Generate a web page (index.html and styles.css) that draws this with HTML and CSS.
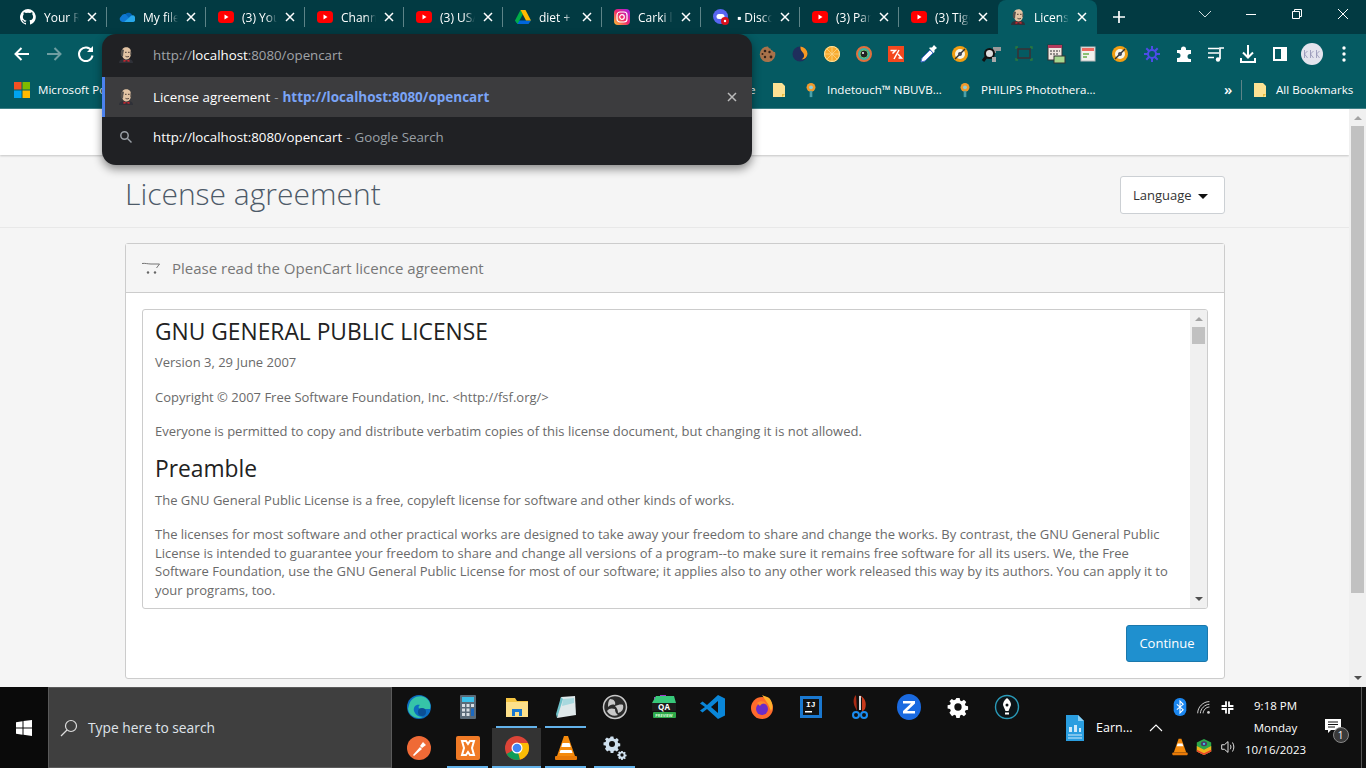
FILE: index.html
```html
<!DOCTYPE html>
<html lang="en">
<head>
<meta charset="UTF-8" />
<title>License agreement</title>
<link rel="stylesheet" href="styles.css">
</head>
<body>

<svg class="defs" width="0" height="0">
  <symbol id="yt" viewBox="0 0 16 16"><rect y="2" width="16" height="12" rx="3.5" fill="#f00"/><path d="M6.5 5.5v5l4-2.5z" fill="#fff"/></symbol>
  <symbol id="x" viewBox="0 0 10 10"><path d="M1 1l8 8M9 1l-8 8" stroke="currentColor" stroke-width="1.5" fill="none"/></symbol>
  <symbol id="jenkins" viewBox="0 0 16 16">
    <path d="M1 16c0-2.500 1.500-3.500 4-4h6c2.500.5 4 1.500 4 4z" fill="#2f3138"/>
    <path d="M3.500 6C3.500 2 5.500.3 8.500.3S13 2.500 13 6c0 3.500-1.500 6.500-4.500 6.500S4 10 3.500 6z" fill="#e3c4a4"/>
    <path d="M3.200 9C2.200 6 3 3.500 4.500 2.300L6 3 5.300 6.500 5 9.500z" fill="#55504c"/>
    <path d="M12.600 3.500l1 2.500-.6 2.500-.8-1z" fill="#55504c"/>
    <path d="M7 5.300h1.600M10 5.300h1.600M7.500 9.300c1 .7 2.500.7 3.500 0" stroke="#3a2c28" stroke-width=".9" fill="none"/>
    <path d="M5.500 12.500l3 1.300 3-1.300v2.500l-3-1-3 1z" fill="#c8262e"/>
  </symbol>
  <symbol id="folder" viewBox="0 0 14 16"><path d="M1 1h9l3 3v11H1z" fill="#fde293"/><path d="M10 15v-3h3z" fill="#e8b93c"/></symbol>
  <symbol id="pin" viewBox="0 0 12 18"><circle cx="6" cy="6" r="5" fill="#f09a2c"/><circle cx="6" cy="6" r="2.200" fill="#8fd0d8"/><rect x="4.500" y="10" width="3" height="7" fill="#4aa0a8"/></symbol>
  <symbol id="badge" viewBox="0 0 16 16"><circle cx="8" cy="8" r="8" fill="#f29d12"/><circle cx="8" cy="8" r="5" fill="#f7f3e8"/><path d="M3 13L13 3" stroke="#333" stroke-width="1.500"/><circle cx="8" cy="8" r="2" fill="#445"/></symbol>
  <symbol id="gear" viewBox="0 0 24 24"><path d="M10 1h4l.6 3 2 .9 2.600-1.700 2.800 2.800-1.700 2.600.9 2 3 .6v4l-3 .6-.9 2 1.700 2.600-2.800 2.800-2.600-1.700-2 .9-.6 3h-4l-.6-3-2-.9-2.600 1.700L1.600 19l1.700-2.600-.9-2-3-.6v-4l3-.6.9-2L1.600 5 4.400 2.200 7 3.900l2-.9z" fill="currentColor" transform="translate(1.200 1.200) scale(.9)"/><circle cx="12" cy="12" r="4" fill="#101010"/></symbol>
</svg>

<div class="screen">

  <div class="tabstrip">
    <div class="tab"><svg class="fav" viewBox="0 0 16 16"><path fill="#fff" d="M8 0a8 8 0 0 0-2.500 15.600c.4.100.5-.2.500-.4v-1.400c-2.200.5-2.700-1-2.700-1-.4-.9-.9-1.200-.9-1.200-.7-.5.100-.5.100-.5.800.1 1.200.8 1.200.8.700 1.200 1.900.9 2.300.7.100-.5.300-.9.500-1.100-1.800-.2-3.600-.9-3.600-4 0-.9.300-1.600.8-2.100-.1-.2-.4-1 .1-2.100 0 0 .7-.2 2.200.8a7.600 7.600 0 0 1 4 0c1.500-1 2.200-.8 2.200-.8.400 1.100.2 1.900.1 2.100.5.600.8 1.300.8 2.100 0 3.100-1.900 3.700-3.700 3.900.3.300.6.800.6 1.500v2.200c0 .2.100.5.600.4A8 8 0 0 0 8 0z"/></svg><span class="tab-title">Your Repositories</span><svg class="tab-x"><use href="#x"/></svg></div>
    <div class="tab"><svg class="fav" viewBox="0 0 16 16"><path fill="#0364b8" d="M6.500 5a4 4 0 0 1 6.800 1.700L8 10 4 8z"/><path fill="#0f78d4" d="M5.500 13H3.500A3 3 0 0 1 2 7.500 4 4 0 0 1 6.500 5L10 9z"/><path fill="#28a8ea" d="M5 13l7-6.300A3.200 3.200 0 0 1 14.500 13z"/></svg><span class="tab-title">My files</span><svg class="tab-x"><use href="#x"/></svg></div>
    <div class="tab"><svg class="fav"><use href="#yt"/></svg><span class="tab-title">(3) YouTube</span><svg class="tab-x"><use href="#x"/></svg></div>
    <div class="tab"><svg class="fav"><use href="#yt"/></svg><span class="tab-title">Channel</span><svg class="tab-x"><use href="#x"/></svg></div>
    <div class="tab"><svg class="fav"><use href="#yt"/></svg><span class="tab-title">(3) USA</span><svg class="tab-x"><use href="#x"/></svg></div>
    <div class="tab"><svg class="fav" viewBox="0 0 16 16"><path fill="#0066da" d="M0 11.500L2.500 15h11L16 11.500z"/><path fill="#00ac47" d="M5.500 1L0 11.500 2.500 15 8 5z"/><path fill="#ffba00" d="M5.500 1h5L16 11.500h-5z"/></svg><span class="tab-title">diet + exercise</span><svg class="tab-x"><use href="#x"/></svg></div>
    <div class="tab"><svg class="fav" viewBox="0 0 16 16"><defs><linearGradient id="ig" x1="0" y1="1" x2="1" y2="0"><stop offset="0" stop-color="#fdc830"/><stop offset=".5" stop-color="#f0246e"/><stop offset="1" stop-color="#a020f0"/></linearGradient></defs><rect width="16" height="16" rx="4" fill="url(#ig)"/><rect x="3" y="3" width="10" height="10" rx="3" fill="none" stroke="#fff" stroke-width="1.200"/><circle cx="8" cy="8" r="2.300" fill="none" stroke="#fff" stroke-width="1.200"/></svg><span class="tab-title">Carki library</span><svg class="tab-x"><use href="#x"/></svg></div>
    <div class="tab"><svg class="fav" viewBox="0 0 16 16"><circle cx="7.500" cy="7.500" r="7.500" fill="#5865f2"/><rect x="3.500" y="5" width="8" height="5" rx="2.500" fill="#fff"/><circle cx="12" cy="12" r="4" fill="#d8101c"/><circle cx="12" cy="12" r="1.200" fill="#fff"/></svg><span class="tab-title">▪ Discord</span><svg class="tab-x"><use href="#x"/></svg></div>
    <div class="tab"><svg class="fav"><use href="#yt"/></svg><span class="tab-title">(3) Party</span><svg class="tab-x"><use href="#x"/></svg></div>
    <div class="tab"><svg class="fav"><use href="#yt"/></svg><span class="tab-title">(3) Tiger</span><svg class="tab-x"><use href="#x"/></svg></div>
    <div class="tab tab-active"><svg class="fav"><use href="#jenkins"/></svg><span class="tab-title">License agreement</span><svg class="tab-x"><use href="#x"/></svg></div>
    <svg class="newtab" viewBox="0 0 12 12"><path d="M6 0v12M0 6h12" stroke="#fff" stroke-width="1.700"/></svg>
    <div class="winctl">
      <svg class="win-btn" viewBox="0 0 46 34"><path d="M17 11l6 6 6-6" fill="none" stroke="#cfdcdd"/></svg>
      <svg class="win-btn" viewBox="0 0 46 34"><path d="M18 14.500h10" stroke="#fff"/></svg>
      <svg class="win-btn" viewBox="0 0 46 34"><path d="M18.500 11.500h7v7h-7zM20.500 11.500v-2h7v7h-2" fill="none" stroke="#fff"/></svg>
      <svg class="win-btn" viewBox="0 0 46 34"><path d="M18 9l10 10M28 9l-10 10" stroke="#fff"/></svg>
    </div>
  </div>

  <div class="toolbar">
    <svg class="tb-btn" viewBox="0 0 32 32"><path d="M23 16H10M15.500 10L9.500 16l6 6" fill="none" stroke="#fff" stroke-width="2"/></svg>
    <svg class="tb-btn" viewBox="0 0 32 32"><path d="M9 16h13M16.500 10l6 6-6 6" fill="none" stroke="#6f9ea2" stroke-width="2"/></svg>
    <svg class="tb-btn" viewBox="0 0 32 32"><path d="M21.500 12.500a6.800 6.800 0 1 0 1 5" fill="none" stroke="#fff" stroke-width="2"/><path d="M23 8v6h-6z" fill="#fff"/></svg>
    <div class="tb-ext">
      <svg class="tb-btn" viewBox="0 0 32 32"><path d="M16 8.500c.5 1.500 1.500 2 2.500 2 0 1.200 1 2 2 2 .5 1 1.500 1.500 2.500 1.500a7.800 7.800 0 1 1-7-5.500z" fill="#a9724a"/><circle cx="13" cy="13" r="1.300" fill="#33221a"/><circle cx="17.500" cy="14" r="1.200" fill="#33221a"/><circle cx="19" cy="19" r="1.400" fill="#33221a"/><circle cx="13" cy="19" r="1.200" fill="#33221a"/><circle cx="10.500" cy="16" r="1" fill="#33221a"/></svg>
      <svg class="tb-btn" viewBox="0 0 32 32"><circle cx="16" cy="16" r="7.500" fill="#1f2e5c"/><path d="M16.500 8.500a7.500 7.500 0 0 1 7 7c0 3-2.500 6-6 6 3-2 3-4 2-6s-3.500-3-3-7z" fill="#f59a23"/></svg>
      <svg class="tb-btn" viewBox="0 0 32 32"><circle cx="16" cy="16" r="8" fill="#f9ab2e"/><path d="M16 9v14M9 16h14M11 11l10 10M21 11L11 21" stroke="#fcd58a" stroke-width=".8"/><circle cx="16" cy="16" r="7.500" fill="none" stroke="#fde3a0"/></svg>
      <svg class="tb-btn" viewBox="0 0 32 32"><circle cx="16" cy="16" r="7" fill="#3ab0a8" stroke="#e2703c" stroke-width="2"/><circle cx="16" cy="16" r="4" fill="#222" stroke="#6ac06a"/><circle cx="15" cy="15" r="1" fill="#fff"/></svg>
      <svg class="tb-btn" viewBox="0 0 32 32"><rect x="8" y="8" width="16" height="16" fill="#f4481e"/><path d="M10.500 12.500h5l-3 3M14 21l5-9M18 16l3.500 4h-3" fill="none" stroke="#fff" stroke-width="1.500"/></svg>
      <svg class="tb-btn" viewBox="0 0 32 32"><path d="M9 24l1-4 8-8 3 3-8 8z" fill="#fff" stroke="#4a6ed0"/><path d="M18 9.500l2 0 2-2.500 3 3-2.500 2v2l-1 1-4.500-5z" fill="#fff"/></svg>
      <svg class="tb-btn" viewBox="0 0 32 32"><use href="#badge" x="8" y="8" width="16" height="16"/></svg>
      <svg class="tb-btn" viewBox="0 0 32 32"><path d="M17 9h8v4h-5v2h-3z" fill="#999"/><circle cx="13.500" cy="15.500" r="4.500" fill="#ddd" stroke="#111" stroke-width="2"/><path d="M10 19l-3 4" stroke="#111" stroke-width="3"/><rect x="16" y="19" width="4" height="5" fill="#aaa"/></svg>
      <svg class="tb-btn" viewBox="0 0 32 32"><rect x="10" y="11" width="12" height="9" fill="none" stroke="#3b3134" stroke-width="1.500"/><path d="M8 11V9h2M22 9h2v2M24 20v2h-2M10 22H8v-2" fill="none" stroke="#2c7a3c" stroke-width="1.300"/></svg>
      <svg class="tb-btn" viewBox="0 0 32 32"><rect x="8" y="7" width="14" height="15" fill="#f1e6e0" stroke="#333"/><rect x="8" y="7" width="14" height="3" fill="#b33a5c"/><path d="M10 13h10M10 16h8" stroke="#333" stroke-dasharray="2 1"/><rect x="14" y="18" width="11" height="7" fill="#a6d88e" stroke="#333"/></svg>
      <svg class="tb-btn" viewBox="0 0 32 32"><rect x="9" y="9" width="14" height="14" fill="#f2f2ee" stroke="#bbb"/><rect x="10" y="10" width="12" height="3" fill="#ee6a60"/><path d="M11 16h6M11 19h4" stroke="#6ab04c" stroke-width="1.500"/></svg>
      <svg class="tb-btn" viewBox="0 0 32 32"><use href="#badge" x="8" y="8" width="16" height="16"/></svg>
      <svg class="tb-btn" viewBox="0 0 32 32"><path d="M16 8v16M8 16h16M10.300 10.300l11.400 11.400M21.700 10.300L10.300 21.700" stroke="#4c4ce8" stroke-width="2"/><circle cx="16" cy="16" r="5" fill="#4c4ce8"/><circle cx="16" cy="16" r="3" fill="#055a62"/></svg>
      <svg class="tb-btn" viewBox="0 0 32 32"><path d="M9 12h4v-1a2.500 2.500 0 0 1 5 0v1h5v4h-1a2.500 2.500 0 0 0 0 5h1v3H9v-4h1a2.500 2.500 0 0 0 0-5H9z" fill="#fff"/></svg>
      <svg class="tb-btn" viewBox="0 0 32 32"><path d="M8 10.500h11M8 15h11M8 19.500h6" stroke="#fff" stroke-width="1.700"/><path d="M20 21V10h4" fill="none" stroke="#fff" stroke-width="1.700"/><circle cx="18" cy="21.500" r="2.200" fill="#fff"/></svg>
      <svg class="tb-btn" viewBox="0 0 32 32"><path d="M16 7v12M11 14.500l5 5 5-5" fill="none" stroke="#fff" stroke-width="2"/><path d="M9 20v4h14v-4" fill="none" stroke="#fff" stroke-width="2"/></svg>
      <svg class="tb-btn" viewBox="0 0 32 32"><rect x="9" y="9" width="14" height="14" fill="#fff"/><rect x="11" y="11" width="6" height="10" fill="#055a62"/></svg>
      <svg class="tb-btn" viewBox="0 0 32 32"><circle cx="16" cy="16" r="11" fill="#e4e4ee"/><path d="M8.500 12v8M8.500 16l3-3M8.500 16l3 4M14.500 12v8M14.500 16l3-3M14.500 16l3 4M20.500 12v8M20.500 16l3-3M20.500 16l3 4" stroke="#9090b4" fill="none" stroke-width=".8"/></svg>
      <svg class="tb-btn" viewBox="0 0 32 32"><circle cx="16" cy="10" r="1.700" fill="#fff"/><circle cx="16" cy="16" r="1.700" fill="#fff"/><circle cx="16" cy="22" r="1.700" fill="#fff"/></svg>
    </div>
  </div>

  <div class="bookmarks">
    <div class="bm bm-ms"><svg class="bm-ico" viewBox="0 0 16 16"><path fill="#f25022" d="M0 0h7.500v7.500H0z"/><path fill="#7fba00" d="M8.500 0H16v7.500H8.500z"/><path fill="#00a4ef" d="M0 8.500h7.500V16H0z"/><path fill="#ffb900" d="M8.500 8.500H16V16H8.500z"/></svg><span>Microsoft Po</span></div>
    <div class="bm bm-e"><span>e</span></div>
    <div class="bm bm-folder"><svg class="bm-ico"><use href="#folder"/></svg></div>
    <div class="bm bm-indet"><svg class="bm-ico"><use href="#pin"/></svg><span>Indetouch™ NBUVB...</span></div>
    <div class="bm bm-phil"><svg class="bm-ico"><use href="#pin"/></svg><span>PHILIPS Photothera...</span></div>
    <div class="bm-more">»</div>
    <div class="bm-sep"></div>
    <div class="bm"><svg class="bm-ico"><use href="#folder"/></svg><span>All Bookmarks</span></div>
  </div>

  <div class="viewport">
    <div class="page">
      <div class="topbar"></div>
      <div class="page-head">
        <h1 class="page-title">License agreement</h1>
        <button class="lang-btn">Language <span class="caret"></span></button>
      </div>
      <div class="panel">
        <div class="panel-head">
          <svg class="cart" viewBox="0 0 18 12"><path d="M0 1.500c3-.5 6 .5 9 .5h8.500L14.500 6" fill="none" stroke="#666" stroke-width=".9"/><circle cx="6" cy="10.500" r="1.200" fill="#666"/><circle cx="13" cy="10.500" r="1.200" fill="#666"/></svg>
          <span>Please read the OpenCart licence agreement</span>
        </div>
        <div class="panel-body">
          <div class="licence">
            <div class="licence-text">
              <h2>GNU GENERAL PUBLIC LICENSE</h2>
              <p>Version 3, 29 June 2007</p>
              <p>Copyright © 2007 Free Software Foundation, Inc. &lt;http://fsf.org/&gt;</p>
              <p>Everyone is permitted to copy and distribute verbatim copies of this license document, but changing it is not allowed.</p>
              <h3>Preamble</h3>
              <p>The GNU General Public License is a free, copyleft license for software and other kinds of works.</p>
              <p>The licenses for most software and other practical works are designed to take away your freedom to share and change the works. By contrast, the GNU General Public License is intended to guarantee your freedom to share and change all versions of a program--to make sure it remains free software for all its users. We, the Free Software Foundation, use the GNU General Public License for most of our software; it applies also to any other work released this way by its authors. You can apply it to your programs, too.</p>
            </div>
            <div class="sbar sbar-inner">
              <span class="arrow-up"></span>
              <div class="thumb thumb-inner"></div>
              <span class="arrow-down"></span>
            </div>
          </div>
          <div class="actions"><button class="btn-continue">Continue</button></div>
        </div>
      </div>
    </div>
    <div class="sbar sbar-page">
      <span class="arrow-up"></span>
      <div class="thumb thumb-page"></div>
      <span class="arrow-down"></span>
    </div>
  </div>

  <div class="taskbar">
    <div class="start"><svg width="16" height="16" viewBox="0 0 16 16"><path fill="#fff" d="M0 2.300l6.500-1v6.200H0zM7.500 1.100L16 0v7.500H7.500zM0 8.500h6.500v6.200l-6.500-1zM7.500 8.500H16V16l-8.500-1.200z"/></svg></div>
    <div class="search">
      <svg width="20" height="20" viewBox="0 0 20 20"><circle cx="12" cy="8" r="5.500" fill="none" stroke="#ddd" stroke-width="1.200"/><path d="M8 12l-6 6" stroke="#ddd" stroke-width="1.200"/></svg>
      <span>Type here to search</span>
    </div>
    <div class="apps">
      <div class="app"><svg viewBox="0 0 26 26"><circle cx="13" cy="13" r="12" fill="#0c6cc0"/><path d="M3 11C5 3 14 0 20 4c4 3 5 7 4 11h-9c-3 0-3-3-1-4-4-1-7 2-6 6 1 3 4 6 9 6-6 3-14-1-15-8z" fill="#36c4a8"/><circle cx="16" cy="18" r="4" fill="#0a4e94"/></svg></div>
      <div class="app"><svg viewBox="0 0 26 26"><rect x="5" y="1" width="16" height="24" rx="1" fill="#5a6a78"/><rect x="7" y="3" width="12" height="5" fill="#3ac0ea"/><path d="M7 10h3v3H7zM11.500 10h3v3h-3zM7 14.500h3v3H7zM11.500 14.500h3v3h-3zM7 19h3v3H7zM11.500 19h3v3h-3z" fill="#d8dee4"/><rect x="16" y="14.500" width="3" height="7.500" fill="#1a68c0"/><rect x="16" y="10" width="3" height="3" fill="#d8dee4"/></svg></div>
      <div class="app app-on"><svg viewBox="0 0 26 26"><path d="M2 4h9l2 3h11v16H2z" fill="#f5c543"/><path d="M2 8h22v15H2z" fill="#fde08a"/><path d="M8 22v-7h10v7h-3v-4h-4v4z" fill="#1a78d0"/></svg></div>
      <div class="app app-on"><svg viewBox="0 0 26 26"><path d="M8 3l14-1 1 19-19 3z" fill="#dfe8ea"/><path d="M8 3L3 20l1 4 6-19z" fill="#6cc0c8"/><path d="M10 5l11-1v5l-12 3z" fill="#a8d8de"/></svg></div>
      <div class="app"><svg viewBox="0 0 26 26"><circle cx="13" cy="13" r="11.500" fill="#2a2a2a" stroke="#c8c8c8" stroke-width="1.500"/><path d="M8 5c4 0 6 3 5 6-3-1-5 0-7 2 0-3 0-6 2-8zM21 11c1 4-1 7-5 8 0-3-1-5-3-7 3-1 6-2 8-1zM5 17c2-3 5-3 8-2 0 3 1 4 3 6-4 2-9 0-11-4z" fill="#c8c8c8"/></svg></div>
      <div class="app"><svg viewBox="0 0 26 26"><path d="M3 3h4v6H3zM9 1h6v7H9z" fill="#a040c8"/><path d="M1 9h24v8H1z" fill="#1c1c1c"/><path d="M5 2h18l2 7H1z" fill="#38c87a"/><rect x="2" y="18" width="23" height="6" rx="1" fill="#2ea84a"/><text x="13" y="15.500" class="qa">QA</text><text x="13" y="23" class="preview">PREVIEW</text></svg></div>
      <div class="app"><svg viewBox="0 0 26 26"><path d="M18 1l7 3.500v17L18 25 7 15l-4.500 3.500L0 16.500 5 13 0 9.500 2.500 7.500 7 11z" fill="#0a86d8"/><path d="M18 7l-7 6 7 6z" fill="#101010"/></svg></div>
      <div class="app"><svg viewBox="0 0 26 26"><circle cx="13" cy="14" r="11" fill="#ff6a2c"/><path d="M13 1c3 2 6 1 8 4 3 4 3 9 1 12l-3-7z" fill="#ffb02c"/><circle cx="13" cy="15" r="6" fill="#6c2cc8"/><path d="M8 9c3-3 8-2 9 1-3-1-5 0-6 2z" fill="#ff8a2c"/></svg></div>
      <div class="app"><svg viewBox="0 0 26 26"><rect x="2" y="2" width="22" height="22" fill="#1a78d0"/><rect x="5" y="5" width="16" height="16" fill="#111"/><text x="8" y="13" class="ij">IJ</text><rect x="7" y="17" width="7" height="1.500" fill="#fff"/></svg></div>
      <div class="app"><svg viewBox="0 0 26 26"><path d="M12 1c6 2 8 8 6 14l-3 3V4z" fill="#c83a1c"/><path d="M9 1c-3 3-3 8-1 12l2 4z" fill="#a82a14"/><path d="M13 2v14" stroke="#ddd" stroke-width="2"/><circle cx="9" cy="21" r="3" fill="none" stroke="#1a8cf0" stroke-width="2"/><circle cx="17" cy="21" r="3" fill="none" stroke="#1a8cf0" stroke-width="2"/></svg></div>
      <div class="app"><svg viewBox="0 0 26 26"><ellipse cx="13" cy="13" rx="12" ry="13" fill="#1a6ae0"/><path d="M7 7h12v2.500L11 17h8v2.500H7V17l8-7.500H7z" fill="#fff"/></svg></div>
      <div class="app app-gear"><svg viewBox="0 0 24 24"><use href="#gear"/></svg></div>
      <div class="app"><svg viewBox="0 0 26 26"><circle cx="13" cy="13" r="11.500" fill="#0c1418" stroke="#2a9ab8" stroke-width="1.400"/><path d="M13 4c3 2 4 5 4 7l-2.500 6h-3L9 11c0-2 1-5 4-7z" fill="#fff"/><circle cx="13" cy="11" r="1.500" fill="#0c1418"/><rect x="11" y="18.500" width="4" height="2" fill="#fff"/></svg></div>

      <div class="app"><svg viewBox="0 0 26 26"><circle cx="13" cy="13" r="12" fill="#ef6a36"/><path d="M7 20l7-8 2 2-8 7zM14 11l3-4 3 3-4 3z" fill="#fff"/></svg></div>
      <div class="app app-on"><svg viewBox="0 0 26 26"><rect x="1" y="1" width="24" height="24" rx="2" fill="#f07a26"/><path d="M7 6h4l2 3 2-3h4l-2 7 2 7h-4l-2-3-2 3H7l2-7z" fill="none" stroke="#fff" stroke-width="2"/></svg></div>
      <div class="app app-on app-active"><svg viewBox="0 0 26 26"><circle cx="13" cy="13" r="12" fill="#db4437"/><path d="M13 13L2.600 19A12 12 0 0 0 16 24.600z" fill="#0f9d58"/><path d="M13 13l3 11.600A12 12 0 0 0 24 8H13z" fill="#fbbc05"/><circle cx="13" cy="13" r="5.500" fill="#fff"/><circle cx="13" cy="13" r="4.300" fill="#4285f4"/></svg></div>
      <div class="app app-on"><svg viewBox="0 0 26 26"><path d="M11 1h4l7 20H4z" fill="#f58a0c"/><path d="M9.500 8h7l1.200 4H8.300zM7.500 15h11l1 3H6.500z" fill="#fff"/><rect x="2" y="21" width="22" height="4" rx="1" fill="#e87a08"/></svg></div>
      <div class="app app-on app-gears"><svg viewBox="0 0 26 26"><g class="gear-big"><use href="#gear" width="18" height="18" x="1" y="0"/></g><g class="gear-small"><use href="#gear" width="10" height="10" x="15" y="15"/></g></svg></div>
    </div>

    <div class="running">
      <svg width="20" height="26" viewBox="0 0 20 26"><path d="M1 0h12l6 6v20H1z" fill="#2a9ee0"/><path d="M13 0l6 6h-6z" fill="#8ad0f4"/><path d="M4 12h3v5H4zM9 10h3v7H9zM14 13h2v4h-2z" fill="#cfeafa"/><path d="M3 20h14M3 23h14" stroke="#cfeafa"/></svg>
      <span>Earn...</span>
    </div>
    <svg class="tray-up" width="14" height="8" viewBox="0 0 14 8"><path d="M1 7l6-6 6 6" fill="none" stroke="#fff" stroke-width="1.100"/></svg>
    <div class="tray">
      <svg viewBox="0 0 20 20"><rect x="3" y="0" width="14" height="20" rx="6.500" fill="#1a86f0"/><path d="M6.500 7l7 6-3.500 3.500V3.500L13.500 7l-7 6" fill="none" stroke="#fff" stroke-width="1.200"/></svg>
      <svg viewBox="0 0 20 20"><path d="M3 17c0-7 6-13 13-13M6 17c0-5 5-10 10-10M9 17c0-3 3-7 7-7" fill="none" stroke="#d0d0d0" stroke-width="1.100"/><circle cx="15" cy="16" r="1.500" fill="#d0d0d0"/></svg>
      <svg class="tray-slack" viewBox="0 0 20 20"><path d="M8 2.500V8H3M12 17.500V12h5M3 12h5v5M17 8h-5V3" stroke="#fff" stroke-width="2.400" fill="none" stroke-linecap="round"/></svg>
      <svg viewBox="0 0 26 26"><path d="M11 1h4l7 20H4z" fill="#f58a0c"/><path d="M9.500 8h7l1.200 4H8.300z" fill="#fff"/><rect x="2" y="21" width="22" height="4" rx="1" fill="#e87a08"/></svg>
      <svg viewBox="0 0 20 20"><path d="M10 1l8 4v10l-8 4-8-4V5z" fill="#2ea84a"/><path d="M2 9l8 4 8-4v6l-8 4-8-4z" fill="#f0b41c"/><path d="M2 13l8 4 8-4v2l-8 4-8-4z" fill="#e8402c"/><ellipse cx="10" cy="6.500" rx="3.500" ry="2.800" fill="#4a3a68"/><circle cx="10" cy="6.500" r="1.300" fill="#3ac0ea"/></svg>
      <svg viewBox="0 0 20 20"><path d="M3 7.500h3l4-3.500v12l-4-3.500H3z" fill="none" stroke="#e4e4e4" stroke-width="1.100"/><path d="M12.500 7.500c1 1.500 1 3.500 0 5M15 5c2 3.300 2 6.700 0 10" fill="none" stroke="#e4e4e4" stroke-width="1.100"/></svg>
    </div>
    <div class="clock">
      <span>9:18 PM</span>
      <span>Monday</span>
      <span>10/16/2023</span>
    </div>
    <div class="notif">
      <svg width="16" height="16" viewBox="0 0 16 16"><path d="M0 1h16v11H6l-3 3v-3H0z" fill="#fff"/><path d="M3 4h10M3 6.500h10M3 9h7" stroke="#101010"/></svg>
      <span class="notif-count">1</span>
    </div>
    <div class="show-desktop"></div>
  </div>

  <div class="omni">
    <div class="omni-row omni-row-first">
      <svg class="omni-ico"><use href="#jenkins"/></svg>
      <span class="omni-url">http://<b>localhost</b>:8080/opencart</span>
    </div>
    <div class="omni-row omni-row-on">
      <svg class="omni-ico"><use href="#jenkins"/></svg>
      <span class="omni-white">License agreement</span><span class="omni-dash">-</span><span class="omni-link">http://localhost:8080/opencart</span>
      <svg class="omni-x"><use href="#x"/></svg>
    </div>
    <div class="omni-row">
      <svg class="omni-ico omni-search" viewBox="0 0 16 16"><circle cx="6.500" cy="6.500" r="3.700" fill="none" stroke="#9aa0a6" stroke-width="1.500"/><path d="M9.500 9.500l4 4" stroke="#9aa0a6" stroke-width="1.500"/></svg>
      <span class="omni-white">http://localhost:8080/opencart</span><span class="omni-dash">-</span><span class="omni-grey">Google Search</span>
    </div>
  </div>

</div>

</body>
</html>
```

FILE: styles.css
```css
* {
  box-sizing: border-box;
}

body {
  margin: 0;
  font-family: "Open Sans", "Noto Sans", sans-serif;
  font-size: 13px;
  color: #666;
}

.defs {
  position: absolute;
}

.screen {
  position: relative;
  width: 1366px;
  height: 768px;
  overflow: hidden;
  display: flex;
  flex-direction: column;
}

/* tabs */
.tabstrip {
  height: 34px;
  flex: none;
  display: flex;
  align-items: stretch;
  padding-left: 8px;
  background: #023a42;
  color: #fff;
}
.tab {
  width: 99px;
  flex: none;
  display: flex;
  align-items: center;
  padding: 0 8px 0 12px;
  gap: 8px;
  font-size: 12px;
  position: relative;
}
.tab::after {
  content: "";
  position: absolute;
  right: 0;
  top: 7px;
  height: 20px;
  width: 1px;
  background: #5d8488;
}
.tab:nth-child(10)::after,
.tab-active::after {
  background: none;
}
.tab-active {
  background: #055a62;
  border-radius: 8px 8px 0 0;
}
.fav {
  width: 16px;
  height: 16px;
  flex: none;
}
.tab-title {
  flex: 1;
  min-width: 0;
  white-space: nowrap;
  overflow: hidden;
  -webkit-mask-image: linear-gradient(90deg, #000 70%, transparent);
  mask-image: linear-gradient(90deg, #000 70%, transparent);
}
.tab-x {
  width: 10px;
  height: 10px;
  flex: none;
  margin-right: 2px;
  color: #fff;
}
.newtab {
  width: 12px;
  height: 12px;
  flex: none;
  align-self: center;
  margin-left: 16px;
}
.winctl {
  margin-left: auto;
  display: flex;
}
.win-btn {
  width: 46px;
  height: 34px;
}

/* toolbar */
.toolbar {
  height: 40px;
  flex: none;
  display: flex;
  align-items: center;
  padding: 0 6px;
  background: #055a62;
}
.tb-btn {
  width: 32px;
  height: 32px;
  flex: none;
}
.tb-ext {
  margin-left: auto;
  display: flex;
}

/* bookmarks */
.bookmarks {
  height: 35px;
  flex: none;
  display: flex;
  align-items: center;
  padding-bottom: 3px;
  background: #055a62;
  border-bottom: 1px solid #3e8086;
  color: #fff;
  font-size: 11.6px;
}
.bm {
  display: flex;
  align-items: center;
  gap: 8px;
  white-space: nowrap;
  flex: none;
}
.bm-ico {
  width: 16px;
  height: 16px;
  flex: none;
}
.bm-ms {
  width: 600px;
  margin-left: 14px;
}
.bm-e {
  margin-left: 135px;
  width: 22px;
}
.bm-folder {
  width: 30px;
}
.bm-indet {
  width: 154px;
  margin-left: 2px;
}
.bm-phil {
  width: 267px;
}
.bm-more {
  width: 14px;
  font-size: 15px;
  font-weight: 600;
  margin-right: 3px;
  line-height: 1;
}
.bm-sep {
  width: 1px;
  height: 20px;
  background: #5d8488;
  margin-right: 10px;
}

/* page */
.viewport {
  height: 578px;
  flex: none;
  display: flex;
  background: #f5f5f5;
  overflow: hidden;
}
.page {
  flex: 1;
  min-width: 0;
}
.topbar {
  height: 46px;
  background: #fff;
  box-shadow: 0 1px 2px rgba(0, 0, 0, 0.2);
}
.page-head {
  height: 73px;
  padding: 21px 124px 0 125px;
  display: flex;
  justify-content: space-between;
  align-items: flex-start;
  border-bottom: 1px solid #e8e8e8;
}
.page-title {
  margin: 0;
  font-size: 30px;
  font-weight: 300;
  line-height: 36px;
  color: #4d5a68;
}
.lang-btn {
  width: 105px;
  height: 38px;
  padding: 0 4px 0 0;
  background: #fff;
  border: 1px solid #ccd0d4;
  border-radius: 3px;
  font: 13px "Open Sans", sans-serif;
  color: #333;
  white-space: nowrap;
}
.caret {
  display: inline-block;
  border: 5px solid transparent;
  border-top-color: #111;
  border-bottom: 0;
  margin-left: 3px;
  vertical-align: middle;
}
.panel {
  width: 1100px;
  margin: 15px 0 0 125px;
  border: 1px solid #ccc;
  border-radius: 3px;
  background: #fff;
}
.panel-head {
  height: 49px;
  display: flex;
  align-items: center;
  gap: 12px;
  padding-left: 16px;
  background: #f5f5f5;
  border-bottom: 1px solid #ccc;
  font-size: 15px;
  color: #777;
}
.cart {
  width: 18px;
  height: 12px;
}
.panel-body {
  padding: 16px;
}
.licence {
  height: 300px;
  display: flex;
  border: 1px solid #ccc;
  border-radius: 3px;
  overflow: hidden;
}
.licence-text {
  flex: 1;
  min-width: 0;
  padding: 7px 16px 0 12px;
  overflow: hidden;
  line-height: 18.57px;
  color: #6a6a6a;
}
.licence-text h2 {
  margin: 0 0 6px;
  font-size: 22.8px;
  font-weight: 400;
  line-height: 30px;
  color: #222;
}
.licence-text h3 {
  margin: 0 0 10px;
  font-size: 22.8px;
  font-weight: 400;
  line-height: 24px;
  color: #222;
}
.licence-text p {
  margin: 0 0 16px;
}
.actions {
  display: flex;
  justify-content: flex-end;
  margin-top: 16px;
}
.btn-continue {
  width: 82px;
  height: 37px;
  padding: 0 0 2px;
  background: #1f90cf;
  border: 1px solid #1b78ac;
  border-radius: 3px;
  font: 13px "Open Sans", sans-serif;
  color: #fff;
}

/* scrollbars */
.sbar {
  width: 17px;
  flex: none;
  display: flex;
  flex-direction: column;
  align-items: center;
  background: #f0f0f0;
}
.sbar-inner {
  height: 100%;
}
.arrow-up,
.arrow-down {
  flex: none;
  height: 0;
  width: 0;
  border-left: 4px solid transparent;
  border-right: 4px solid transparent;
}
.arrow-up {
  border-bottom: 4px solid #a3a3a3;
  margin: 7px 0 6px;
}
.arrow-down {
  border-top: 4px solid #505050;
  margin: auto 0 7px;
}
.thumb {
  flex: none;
  background: #c1c1c1;
}
.thumb-inner {
  width: 13px;
  height: 17px;
}
.thumb-page {
  width: 13px;
  height: 467px;
}

/* taskbar */
.taskbar {
  flex: 1;
  display: flex;
  background: #101010;
  color: #fff;
  position: relative;
}
.start {
  width: 48px;
  flex: none;
  display: flex;
  align-items: center;
  justify-content: center;
  background: #0a0a0a;
}
.search {
  width: 344px;
  flex: none;
  display: flex;
  align-items: center;
  gap: 9px;
  padding-left: 10px;
  background: #3f3f3f;
  border: 1px solid #5a5a5a;
  font-size: 13.8px;
  color: #dfe4ea;
}
.apps {
  display: grid;
  grid-template-columns: repeat(13, 49px);
  grid-auto-rows: 40.5px;
  margin-left: 2px;
  align-self: start;
  flex: none;
}
.app {
  display: flex;
  align-items: center;
  justify-content: center;
  position: relative;
  color: #fff;
}
.app svg {
  width: 26px;
  height: 26px;
}
.app-gear svg {
  width: 22px;
  height: 22px;
}
.app-on::after {
  content: "";
  position: absolute;
  left: 4px;
  right: 4px;
  bottom: 0;
  height: 2px;
  background: #63b2ea;
}
.app-active {
  background: #333;
}
.app-active::after {
  left: 0;
  right: 0;
}
.app-gears {
  color: #cfe0ee;
}
.qa {
  font: bold 8px "Open Sans", sans-serif;
  fill: #fff;
  text-anchor: middle;
}
.preview {
  font: bold 4px "Open Sans", sans-serif;
  fill: #d8ffd8;
  text-anchor: middle;
}
.ij {
  font: bold 8px "Liberation Mono", monospace;
  fill: #fff;
}
.running {
  display: flex;
  align-items: center;
  gap: 11px;
  margin-left: 34px;
  font-size: 12.5px;
  flex: none;
}
.tray-up {
  flex: none;
  align-self: center;
  margin-left: 16px;
}
.tray {
  display: grid;
  grid-template-columns: repeat(3, 24px);
  grid-auto-rows: 40px;
  align-items: center;
  justify-items: center;
  margin-left: 5px;
  flex: none;
}
.tray svg {
  width: 18px;
  height: 18px;
}
.tray .tray-slack {
  width: 15px;
  height: 15px;
}
.clock {
  width: 72px;
  flex: none;
  display: flex;
  flex-direction: column;
  align-items: center;
  justify-content: center;
  gap: 5px;
  font-size: 11.5px;
  line-height: 17px;
  white-space: nowrap;
}
.notif {
  position: relative;
  display: flex;
  align-items: center;
  margin-left: 13px;
  padding-bottom: 3px;
}
.notif-count {
  position: absolute;
  left: 8px;
  top: 40px;
  width: 16px;
  height: 16px;
  border-radius: 50%;
  background: #3a3a3a;
  border: 1px solid #888;
  font-size: 10px;
  line-height: 14px;
  text-align: center;
}
.show-desktop {
  width: 1px;
  margin-left: 20px;
  background: #555;
}

/* address bar dropdown */
.omni {
  position: absolute;
  left: 102px;
  top: 34px;
  width: 650px;
  height: 131px;
  padding-bottom: 8px;
  background: #202124;
  border-radius: 14px;
  box-shadow: 0 4px 10px rgba(0, 0, 0, 0.45);
  font-size: 13.3px;
  color: #fff;
}
.omni-row {
  height: 40px;
  display: flex;
  align-items: center;
  padding-left: 16px;
  white-space: nowrap;
  position: relative;
}
.omni-row-first {
  height: 43px;
  padding-bottom: 2px;
}
.omni-row-on {
  background: #3c3c3e;
}
.omni-row-on::before {
  content: "";
  position: absolute;
  left: 0;
  top: 0;
  bottom: 0;
  width: 3px;
  background: #4c82ee;
}
.omni-ico {
  width: 16px;
  height: 16px;
  flex: none;
  margin-right: 19px;
}
.omni-url {
  color: #a0a4a8;
}
.omni-url b {
  font-weight: 400;
  color: #fff;
}
.omni-dash {
  margin: 0 4px;
  color: #9aa0a6;
}
.omni-link {
  color: #7aa4f6;
  font-weight: 700;
  font-size: 13.5px;
}
.omni-grey {
  color: #9aa0a6;
}
.omni-x {
  position: absolute;
  right: 15px;
  top: 15px;
  width: 10px;
  height: 10px;
  color: #bbb;
}
```
